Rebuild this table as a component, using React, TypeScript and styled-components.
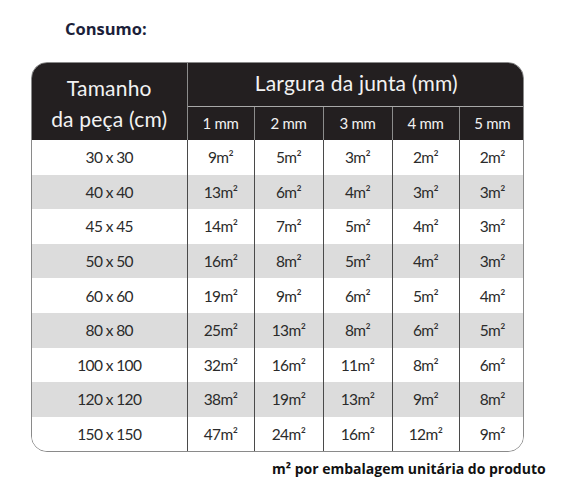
import styled, { createGlobalStyle } from 'styled-components';

const GlobalStyle = createGlobalStyle`
  html, body {
    margin: 0;
    padding: 0;
    background: #ffffff;
  }
`;

const widths = [1, 2, 3, 4, 5];
const colWidths = [155, 67, 69, 69, 67, 66];

const rows: { size: string; values: number[] }[] = [
  { size: '30 x 30', values: [9, 5, 3, 2, 2] },
  { size: '40 x 40', values: [13, 6, 4, 3, 3] },
  { size: '45 x 45', values: [14, 7, 5, 4, 3] },
  { size: '50 x 50', values: [16, 8, 5, 4, 3] },
  { size: '60 x 60', values: [19, 9, 6, 5, 4] },
  { size: '80 x 80', values: [25, 13, 8, 6, 5] },
  { size: '100 x 100', values: [32, 16, 11, 8, 6] },
  { size: '120 x 120', values: [38, 19, 13, 9, 8] },
  { size: '150 x 150', values: [47, 24, 16, 12, 9] },
];

export default function App() {
  return (
    <Page>
      <GlobalStyle />
      <Title>Consumo:</Title>

      <TableFrame>
        <Table>
          <colgroup>
            {colWidths.map((w, i) => (
              <Col key={i} $w={w} />
            ))}
          </colgroup>
          <thead>
            <GroupRow>
              <SizeHead rowSpan={2}>
                Tamanho
                <br />
                da peça (cm)
              </SizeHead>
              <GroupHead colSpan={5}>Largura da junta (mm)</GroupHead>
            </GroupRow>
            <WidthRow>
              {widths.map((w, i) => (
                <WidthHead key={w} $last={i === widths.length - 1}>
                  {w} mm
                </WidthHead>
              ))}
            </WidthRow>
          </thead>
          <tbody>
            {rows.map((row, r) => (
              <BodyRow key={row.size} $striped={r % 2 === 1}>
                <SizeCell>{row.size}</SizeCell>
                {row.values.map((v, i) => (
                  <ValueCell key={i} $last={i === row.values.length - 1}>
                    {v}m²
                  </ValueCell>
                ))}
              </BodyRow>
            ))}
          </tbody>
        </Table>
      </TableFrame>

      <Footer>m² por embalagem unitária do produto</Footer>
    </Page>
  );
}

const Page = styled.div`
  display: flex;
  flex-direction: column;
  align-items: flex-start;
  width: 575px;
  height: 500px;
  padding: 17px 0 0 31px;
  box-sizing: border-box;
`;

const Title = styled.div`
  margin-left: 34px;
  font-family: 'Open Sans', 'Liberation Sans', sans-serif;
  font-weight: 700;
  font-size: 16.5px;
  line-height: 24px;
  color: #1c1f3a;
`;

const TableFrame = styled.div`
  margin-top: 21px;
  width: 493px;
  border: 1px solid #8a8a8a;
  border-radius: 16px;
  overflow: hidden;
  box-sizing: border-box;
`;

const Table = styled.table`
  width: 100%;
  border-collapse: collapse;
  table-layout: fixed;
  font-family: Lato, 'DejaVu Sans', sans-serif;
`;

const Col = styled.col<{ $w: number }>`
  width: ${({ $w }) => $w}px;
`;

const GroupRow = styled.tr`
  height: 43px;
`;

const WidthRow = styled.tr`
  height: 34px;
`;

const HeadCell = styled.th`
  background: #231f20;
  color: #f2f2f2;
  font-weight: 400;
  padding: 0;
  text-align: center;
  vertical-align: middle;
`;

const SizeHead = styled(HeadCell)`
  font-size: 21px;
  line-height: 31px;
  letter-spacing: 0.2px;
  border-right: 1px solid #8c8c8c;
  padding-top: 2px;
`;

const GroupHead = styled(HeadCell)`
  font-size: 21px;
  line-height: 26px;
  letter-spacing: 0.2px;
  border-bottom: 1px solid #a8a8a8;
  padding-bottom: 3px;
`;

const WidthHead = styled(HeadCell)<{ $last: boolean }>`
  font-size: 15px;
  line-height: 20px;
  letter-spacing: -0.3px;
  border-right: ${({ $last }) => ($last ? 'none' : '1.5px solid #8c8c8c')};
`;

const BodyRow = styled.tr<{ $striped: boolean }>`
  height: 34.6px;
  background: ${({ $striped }) => ($striped ? '#dcdcdc' : '#ffffff')};
`;

const BodyCell = styled.td`
  padding: 0;
  text-align: center;
  color: #2b2b2b;
  font-size: 15.5px;
  line-height: 20px;
  letter-spacing: -0.6px;
`;

const SizeCell = styled(BodyCell)`
  border-right: 1.5px solid #4a4a4a;
`;

const ValueCell = styled(BodyCell)<{ $last: boolean }>`
  border-right: ${({ $last }) => ($last ? 'none' : '1.5px solid #4a4a4a')};
`;

const Footer = styled.div`
  margin: 7px 0 0 241px;
  font-family: 'Open Sans', 'Liberation Sans', sans-serif;
  font-weight: 700;
  font-size: 14px;
  line-height: 20px;
  color: #111111;
`;
